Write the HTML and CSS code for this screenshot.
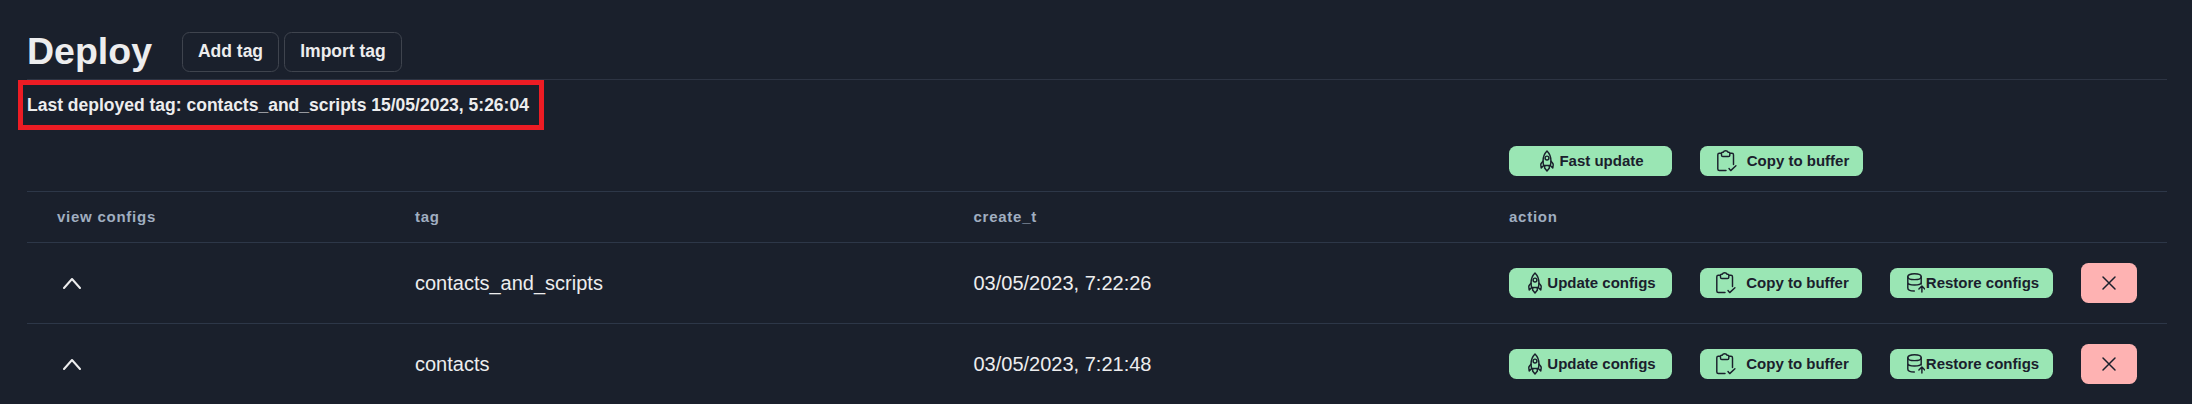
FILE: index.html
```html
<!DOCTYPE html>
<html lang="en">
<head>
<meta charset="utf-8">
<title>Deploy</title>
<link rel="stylesheet" href="styles.css">
</head>
<body>
<svg class="symbols" aria-hidden="true">
  <symbol id="rocket" viewBox="0 0 14 22">
    <path d="M3.6 15.5C2.2 9.2 4 4 7 1C10 4 11.800 9.200 10.400 15.500Z"/>
    <circle cx="7" cy="8" r="1.900"/>
    <path d="M3 11.200L1.500 13Q.7 14 .8 15L1.200 18L3.800 15.500M11 11.200L12.500 13Q13.300 14 13.200 15L12.800 18L10.200 15.500M4.800 16L4.600 18L7 21L9.400 18L9.200 16"/>
  </symbol>
  <symbol id="clipboard" viewBox="0 0 20 22">
    <path d="M4.500 3.200H2.300Q.8 3.200 .8 4.700V19Q.8 20.500 2.300 20.500H9M12.800 3.200H15Q16.500 3.200 16.500 4.700V14.500M4.500 3Q4.500 2.200 5.500 2.200H6.300Q6.800 .8 8.650 .8T11 2.200H11.800Q12.800 2.200 12.800 3V5.200Q12.800 6.500 11.500 6.500H5.800Q4.500 6.500 4.500 5.200ZM12 18.500L13.700 20.600L18.900 15.800"/>
  </symbol>
  <symbol id="database" viewBox="0 0 18 20">
    <ellipse cx="7.500" cy="3.700" rx="6.700" ry="2.900"/>
    <path d="M.8 3.700V15C.8 17 3.500 18 7.300 18M14.200 3.700V11M.8 9.200C.8 13 14.200 13 14.200 9.200M14.900 19V13.400M11.900 16L14.900 13L17.800 16"/>
  </symbol>
  <symbol id="cross" viewBox="0 0 14 14"><path d="M1 1L13 13M13 1L1 13"/></symbol>
  <symbol id="chevron" viewBox="0 0 18 11"><path d="M1 10L9 1L17 10"/></symbol>
</svg>
<main class="page">
  <header class="header">
    <h1 class="title">Deploy</h1>
    <button class="outline add">Add tag</button>
    <button class="outline import">Import tag</button>
  </header>
  <div class="last">Last deployed tag: contacts_and_scripts 15/05/2023, 5:26:04</div>
  <section class="table">
    <div class="row tools">
      <div class="actions">
        <button class="btn"><svg class="rocket"><use href="#rocket"/></svg><span class="label">Fast update</span></button>
        <button class="btn"><svg class="clip"><use href="#clipboard"/></svg><span class="label">Copy to buffer</span></button>
      </div>
    </div>
    <div class="row head"><span>view configs</span><span>tag</span><span>create_t</span><span>action</span></div>
    <div class="row item">
      <svg class="chevron"><use href="#chevron"/></svg><span>contacts_and_scripts</span><span>03/05/2023, 7:22:26</span>
      <div class="actions">
        <button class="btn"><svg class="rocket"><use href="#rocket"/></svg><span class="label">Update configs</span></button>
        <button class="btn copy"><svg class="clip"><use href="#clipboard"/></svg><span class="label">Copy to buffer</span></button>
        <button class="btn"><svg class="db"><use href="#database"/></svg><span class="label">Restore configs</span></button>
        <button class="btn delete" aria-label="Delete"><svg class="cross"><use href="#cross"/></svg></button>
      </div>
    </div>
    <div class="row item">
      <svg class="chevron"><use href="#chevron"/></svg><span>contacts</span><span>03/05/2023, 7:21:48</span>
      <div class="actions">
        <button class="btn"><svg class="rocket"><use href="#rocket"/></svg><span class="label">Update configs</span></button>
        <button class="btn copy"><svg class="clip"><use href="#clipboard"/></svg><span class="label">Copy to buffer</span></button>
        <button class="btn"><svg class="db"><use href="#database"/></svg><span class="label">Restore configs</span></button>
        <button class="btn delete" aria-label="Delete"><svg class="cross"><use href="#cross"/></svg></button>
      </div>
    </div>
  </section>
</main>
</body>
</html>
```
FILE: styles.css
```css
* { box-sizing: border-box; }
body { margin: 0; background: #1a202c; color: #ededee; font-family: "Liberation Sans", Arial, sans-serif; overflow: hidden; }
button { font: inherit; color: inherit; margin: 0; padding: 0; white-space: nowrap; }
svg { fill: none; stroke: currentColor; stroke-width: 1.45; stroke-linecap: round; stroke-linejoin: round; flex: none; }
.symbols { display: none; }
.page { height: 404px; padding: 0 25px 0 27px; }
.header { display: flex; height: 80px; padding-top: 32px; border-bottom: 1px solid #2d3443; }
.title { width: 155px; margin: 0; font-size: 37.5px; line-height: 38px; font-weight: 700; }
.outline { height: 40px; padding-bottom: 2px; border: 1px solid #3f444e; border-radius: 7.5px; background: none; font-size: 17.5px; font-weight: 700; }
.add { width: 97px; }
.import { width: 118px; margin-left: 5px; }
.last { width: 526px; height: 50px; margin-left: -9px; padding-left: 4px; border: 5px solid #ed1c24; font-size: 17.5px; line-height: 40px; font-weight: 700; white-space: nowrap; }
.row { display: grid; grid-template-columns: 358px 558.5px 535.5px 1fr; align-items: center; padding-left: 30px; border-bottom: 1px solid #2d3748; }
.tools { height: 62px; }
.tools .actions { grid-column: 4; }
.head { height: 51px; padding-bottom: 2px; color: #a0aec0; font-size: 15px; font-weight: 700; letter-spacing: .75px; }
.item { height: 81px; font-size: 20px; }
.item:last-child { border-bottom-color: transparent; }
.actions { display: flex; align-items: center; gap: 28px; }
.btn { display: flex; align-items: center; justify-content: center; width: 163px; height: 30px; padding-left: 3px; border: 0; border-radius: 7.5px; background: #9ae6b4; color: #1a202c; font-size: 15px; font-weight: 700; }
.label { padding-bottom: 1px; }
.copy { width: 162px; }
.delete { width: 56px; height: 40px; padding: 0; background: #feb2b2; }
.rocket { width: 14px; height: 22px; margin-right: 5px; }
.clip { width: 20px; height: 22px; margin-right: 10px; }
.db { width: 18px; height: 20px; margin-right: 1px; }
.cross { width: 14px; height: 14px; }
.chevron { width: 18px; height: 11px; margin-left: 6px; stroke-width: 2; }
```
